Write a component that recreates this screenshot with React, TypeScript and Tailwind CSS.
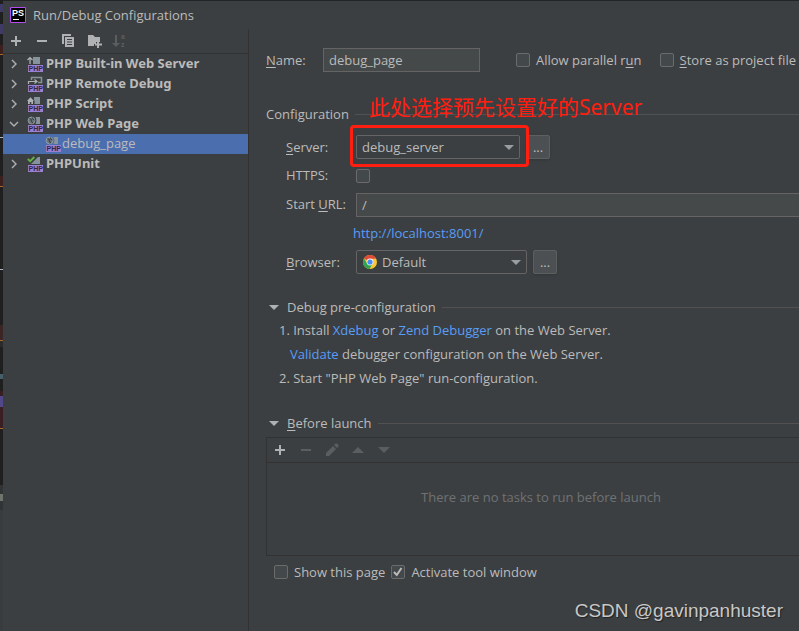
import { ReactNode, useState } from 'react';

type Kind = 'server' | 'remote' | 'script' | 'web' | 'unit';

const CONFIG_TYPES: { label: string; kind: Kind; items?: string[] }[] = [
  { label: 'PHP Built-in Web Server', kind: 'server' },
  { label: 'PHP Remote Debug', kind: 'remote' },
  { label: 'PHP Script', kind: 'script' },
  { label: 'PHP Web Page', kind: 'web', items: ['debug_page'] },
  { label: 'PHPUnit', kind: 'unit' },
];

// Slice of the editor window that shows behind the dialog
const EDITOR_STRIP = [
  'h-[4px] bg-[#1f1f1f]',
  'h-[8px] bg-[#3f3a66]',
  'h-[12px] bg-[#1f1f1f]',
  'h-[10px] bg-[#3f3a66]',
  'h-[11px] bg-[#1f1f1f]',
  'h-[9px] bg-[#3c1f1f]',
  'h-px bg-[#a8682f]',
  'h-[82px] bg-[#1f1f1f]',
  'h-px bg-[#a9b7c6]',
  'h-[38px] bg-[#1f1f1f]',
  'h-[10px] bg-[#3c1f1f]',
  'h-px bg-[#a8682f]',
  'h-[82px] bg-[#1f1f1f]',
  'h-px bg-[#a9b7c6]',
  'h-[55px] bg-[#1f1f1f]',
  'h-[15px] bg-[#3c2525]',
  'h-px bg-[#a8682f]',
  'h-[6px] bg-[#2b2b2b]',
  'h-[27px] bg-[#1f1f1f]',
  'h-[5px] bg-[#46606a]',
  'h-[12px] bg-[#1f1f1f]',
  'h-[5px] bg-[#3a1f22]',
  'h-[11px] bg-[#51478a]',
  'h-[21px] bg-[#3a1f22]',
  'h-px bg-[#a8682f]',
  'h-[56px] bg-[#1f1f1f]',
  'h-[9px] bg-[#313335]',
  'h-[7px] bg-[#6f756c]',
  'h-[9px] bg-[#313335]',
  'flex-1 bg-[#393c3e]',
];

function KindIcon({ kind }: { kind: Kind }) {
  return (
    <svg width="16" height="16" viewBox="0 0 16 16" className="shrink-0" aria-hidden="true">
      {kind === 'server' && (
        <>
          <path d="M6 1h7v7H6z" fill="#87939a" />
          <path d="M3 8V2M.5 4L3 1.500 5.500 4" stroke="#afb1b3" strokeWidth="1.2" fill="none" />
        </>
      )}
      {kind === 'remote' && (
        <>
          <path d="M4.500 4V1.500h10v5H11" stroke="#87939a" strokeWidth="1.5" fill="none" />
          <path d="M1.500 8V5.500h8M7.500 3.500l2.500 2-2.500 2" stroke="#afb1b3" strokeWidth="1.2" fill="none" />
        </>
      )}
      {kind === 'script' && (
        <>
          <path d="M7 1h6v7H7.500V4.500L7 4z" fill="#87939a" />
          <path d="M0 5l3.500-3.800L7 5H6v3H4.300V6H2.800v2H1V5z" fill="#afb1b3" />
        </>
      )}
      {kind === 'web' && (
        <>
          <path d="M9 1h4v7H8.500C9.700 6 9.700 3 8.500 1z" fill="#87939a" />
          <circle cx="4.500" cy="4.500" r="3.400" fill="#6c757b" stroke="#9aa7b0" strokeWidth="0.800" />
          <path d="M2.500 2.500l2 1L4 5l1.500 1L5 7.500M5.500 1.500l.5 2 1.500.5" stroke="#343a3d" strokeWidth="1" fill="none" />
        </>
      )}
      {kind === 'unit' && (
        <>
          <path d="M13 1v7H4l7-7z" fill="#87939a" />
          <path d="M.8 3l2.400 2.200L7.300 1" stroke="#62b543" strokeWidth="1.800" fill="none" />
        </>
      )}
      <path d="M1 9h15v7H1z" fill="#9b7fd0" />
      <text x="1.500" y="15" fontSize="7" fontWeight="700" fontFamily="Liberation Sans, sans-serif" fill="#2f2748">
        PHP
      </text>
    </svg>
  );
}

function Chevron({ open }: { open: boolean }) {
  return (
    <svg width="10" height="10" viewBox="0 0 10 10" fill="none" stroke="#afb1b3" strokeWidth="1.400" aria-hidden="true">
      <path d={open ? 'M1 3l4 4 4-4' : 'M3 1l4 4-4 4'} />
    </svg>
  );
}

function Arrow({ up = false, className = '' }: { up?: boolean; className?: string }) {
  return (
    <svg width="12" height="6" viewBox="0 0 12 6" className={className} fill="currentColor" aria-hidden="true">
      <path d={up ? 'M0 6L6 0l6 6z' : 'M0 0h12L6 6z'} />
    </svg>
  );
}

function ToolButton({ label, disabled, children }: { label: string; disabled?: boolean; children: ReactNode }) {
  return (
    <button
      aria-label={label}
      disabled={disabled}
      className="flex h-4 w-4 items-center justify-center text-[#afb1b3] disabled:text-[#5b5e60]"
    >
      {children}
    </button>
  );
}

const plusIcon = (
  <svg width="16" height="16" viewBox="0 0 16 16" fill="currentColor">
    <path d="M7 3h2v4h4v2H9v4H7V9H3V7h4z" />
  </svg>
);

const minusIcon = (
  <svg width="16" height="16" viewBox="0 0 16 16" fill="currentColor">
    <path d="M3 7h10v2H3z" />
  </svg>
);

function Key({ children }: { children: ReactNode }) {
  return <span className="underline decoration-1 underline-offset-2">{children}</span>;
}

function CheckBox({ id, checked = false, children }: { id: string; checked?: boolean; children?: ReactNode }) {
  const [on, setOn] = useState(checked);

  return (
    <div className="flex items-center gap-[6px] whitespace-nowrap">
      <span className="relative flex h-[14px] w-[14px]">
        <input
          id={id}
          type="checkbox"
          checked={on}
          onChange={(e) => setOn(e.target.checked)}
          className="h-[14px] w-[14px] appearance-none rounded-xs border border-[#6b6b6b] bg-[#43494a]"
        />
        {on && (
          <svg
            width="14"
            height="14"
            viewBox="0 0 14 14"
            className="pointer-events-none absolute inset-0"
            fill="none"
            stroke="#bbbbbb"
            strokeWidth="2"
          >
            <path d="M3 7l2.800 3L10.500 3" />
          </svg>
        )}
      </span>
      {children && <label htmlFor={id}>{children}</label>}
    </div>
  );
}

function Select({ id, value, className, icon }: { id: string; value: string; className: string; icon?: ReactNode }) {
  return (
    <div className={`relative flex h-6 items-center ${className}`}>
      <select
        id={id}
        className={`h-6 w-full appearance-none rounded-xs border border-[#646464] bg-[#3c3f41] ${icon ? 'pl-[25px]' : 'pl-[5px]'}`}
      >
        <option>{value}</option>
      </select>
      {icon && <span className="pointer-events-none absolute left-[7px]">{icon}</span>}
      <Arrow className="pointer-events-none absolute right-[6px] h-[5px] w-[10px] text-[#9a9da0]" />
    </div>
  );
}

function MoreButton({ label }: { label: string }) {
  return (
    <button
      aria-label={label}
      className="h-6 w-6 rounded-xs border border-[#5e6060] bg-[#4c5052] text-center leading-[22px] shadow-sm"
    >
      ...
    </button>
  );
}

const chromeIcon = (
  <svg width="14" height="14" viewBox="0 0 14 14">
    <circle cx="7" cy="7" r="7" fill="#fbc734" />
    <path d="M7 7L1 3.400A7 7 0 0 1 13.200 3.800H7z" fill="#e04a3a" />
    <path d="M1 3.400A7 7 0 0 0 6.500 14L9.800 8.600 4.200 8.600z" fill="#2fa350" />
    <circle cx="7" cy="7" r="3.400" fill="#f1f1f1" />
    <circle cx="7" cy="7" r="2.600" fill="#4a8af4" />
  </svg>
);

function Section({ children, collapsible, id }: { children: ReactNode; collapsible?: boolean; id: string }) {
  return (
    <div className="flex h-5 items-center gap-[6px]">
      {collapsible ? (
        <button aria-expanded="true" aria-controls={id} className="flex items-center gap-2 pl-[3px]">
          <Arrow className="h-[5px] w-[10px] text-[#afb1b3]" />
          <span>{children}</span>
        </button>
      ) : (
        <h2>{children}</h2>
      )}
      <span className="h-px flex-1 bg-[#515151]" />
    </div>
  );
}

function Sidebar() {
  const [selected, setSelected] = useState('debug_page');

  return (
    <aside className="w-[246px] shrink-0 border-r border-[#323232]">
      <div className="flex h-[25px] items-center gap-[10px] border-b border-[#323232] pl-[5px]">
        <ToolButton label="Add">{plusIcon}</ToolButton>
        <ToolButton label="Remove">{minusIcon}</ToolButton>
        <ToolButton label="Copy">
          <svg width="16" height="16" viewBox="0 0 16 16" fill="currentColor">
            <path d="M2 1h9v2H4v8H2z" />
            <path fillRule="evenodd" d="M5 4h9v10H5zM7 6v1h5V6zM7 8.500v1h5v-1zM7 11v1h5v-1z" />
          </svg>
        </ToolButton>
        <ToolButton label="New folder">
          <svg width="16" height="16" viewBox="0 0 16 16" fill="currentColor">
            <path d="M2 2h5l2 2h5v5h-4v2H8v2H2z" />
            <path d="M11 8h2v2.500h3v2h-3V15h-2v-2.500H9v-2h2z" />
          </svg>
        </ToolButton>
        <ToolButton label="Sort" disabled>
          <svg width="16" height="16" viewBox="0 0 16 16" fill="currentColor">
            <path d="M3 2h2v8h3l-4 4-4-4h3z" />
            <text x="9" y="6" fontSize="7" fontWeight="700" fontFamily="Liberation Sans, sans-serif">a</text>
            <text x="9" y="14" fontSize="7" fontWeight="700" fontFamily="Liberation Sans, sans-serif">z</text>
          </svg>
        </ToolButton>
      </div>
      <ul>
        {CONFIG_TYPES.map((type) => (
          <li key={type.label}>
            <button aria-expanded={!!type.items} className="flex h-5 w-full items-center pl-[6px] font-['Noto_Sans',sans-serif] font-bold">
              <Chevron open={!!type.items} />
              <span className="w-2" />
              <KindIcon kind={type.kind} />
              <span className="pb-0.5 pl-[3px]">{type.label}</span>
            </button>
            {type.items?.map((item) => (
              <button
                key={item}
                onClick={() => setSelected(item)}
                className={`flex h-5 w-full items-center pl-[42px] ${selected === item ? 'bg-[#4b6eaf]' : ''}`}
              >
                <KindIcon kind={type.kind} />
                <span className="pb-0.5 pl-px">{item}</span>
              </button>
            ))}
          </li>
        ))}
      </ul>
    </aside>
  );
}

export default function App() {
  return (
    <div className="relative flex min-h-screen overflow-hidden bg-[#3c3f41] font-['Open_Sans','Noto_Sans_CJK_SC',sans-serif] text-[13px] leading-5 text-[#bbbbbb]">
      <div className="flex w-[3px] shrink-0 flex-col" aria-hidden="true">
        {EDITOR_STRIP.map((cls, i) => (
          <div key={i} className={cls} />
        ))}
      </div>

      <div className="flex min-w-0 flex-1 flex-col border-t border-[#232425]">
        <header className="flex h-7 items-center gap-[7px] pl-[7px]">
          <svg width="16" height="16" viewBox="0 0 16 16" aria-hidden="true">
            <path d="M.5.500h15v15H.5z" fill="#000" stroke="#b44df0" />
            <text x="2" y="9" fontSize="9" fontWeight="700" fontFamily="Liberation Sans, sans-serif" fill="#fff">PS</text>
            <path d="M3 12h6v1H3z" fill="#fff" />
          </svg>
          <h1>Run/Debug Configurations</h1>
        </header>

        <div className="flex flex-1">
          <Sidebar />

          <main className="min-w-0 flex-1 pl-[17px] pt-[19px]">
            <div className="flex h-6 items-center whitespace-nowrap">
              <label htmlFor="name" className="w-[57px] shrink-0">
                <Key>N</Key>ame:
              </label>
              <input
                id="name"
                defaultValue="debug_page"
                className="h-6 w-[157px] shrink-0 border border-[#646464] bg-[#45494a] px-[5px]"
              />
              <div className="ml-9 flex gap-[18px]">
                <CheckBox id="parallel">
                  Allow parallel r<Key>u</Key>n
                </CheckBox>
                <CheckBox id="store">
                  <Key>S</Key>tore as project file
                </CheckBox>
              </div>
            </div>

            <div className="relative pt-8">
              <Section id="configuration">Configuration</Section>
              <p className="absolute left-[103px] top-[20px] font-['Noto_Sans','Noto_Sans_CJK_SC',sans-serif] text-[21px] leading-[30px] whitespace-nowrap text-[#ff1e10]">
                此处选择预先设置好的Server
              </p>
            </div>

            <div id="configuration" className="pl-5 pt-[11px]">
              <div className="relative flex h-6 items-center">
                <label htmlFor="server" className="w-[70px]">
                  <Key>S</Key>erver:
                </label>
                <Select id="server" value="debug_server" className="w-[164px]" />
                <div className="ml-[6px] flex">
                  <MoreButton label="Servers" />
                </div>
                <div className="pointer-events-none absolute -top-[10px] left-[64px] h-[42px] w-[179px] rounded-sm border-[3px] border-[#ff1e10]" />
              </div>
              <div className="flex h-[34px] items-center">
                <label htmlFor="https" className="w-[70px] pb-0.5">HTTPS:</label>
                <CheckBox id="https" />
              </div>
              <div className="flex h-6 items-center">
                <label htmlFor="url" className="w-[70px] pb-0.5">
                  Start <Key>U</Key>RL:
                </label>
                <input
                  id="url"
                  defaultValue="/"
                  className="h-6 min-w-0 flex-1 border border-r-0 border-[#646464] bg-[#45494a] px-[5px]"
                />
              </div>
              <a href="http://localhost:8001/" className="ml-[67px] flex h-[33px] items-center pb-0.5 text-[#589df6]">
                http://localhost:8001/
              </a>
              <div className="flex h-6 items-center">
                <label htmlFor="browser" className="w-[70px]">
                  <Key>B</Key>rowser:
                </label>
                <Select id="browser" value="Default" className="w-[171px]" icon={chromeIcon} />
                <div className="ml-[6px] flex">
                  <MoreButton label="Browsers" />
                </div>
              </div>
            </div>

            <div className="pt-[23px]">
              <Section id="preconfig" collapsible>Debug pre-configuration</Section>
              <div id="preconfig" className="pb-[23px] pl-[13px] pt-px leading-6">
                <p>
                  1. Install <a href="#xdebug" className="text-[#589df6]">Xdebug</a> or{' '}
                  <a href="#zend" className="text-[#589df6]">Zend Debugger</a> on the Web Server.
                </p>
                <p className="pl-[11px]">
                  <a href="#validate" className="text-[#589df6]">Validate</a> debugger configuration on the Web Server.
                </p>
                <p>2. Start "PHP Web Page" run-configuration.</p>
              </div>
              <Section id="before" collapsible>
                <Key>B</Key>efore launch
              </Section>
            </div>

            <div id="before" className="mt-1 border border-r-0 border-[#323232]">
              <div className="flex h-[25px] items-center gap-[10px] border-b border-[#323232] pl-[5px]">
                <ToolButton label="Add task">{plusIcon}</ToolButton>
                <ToolButton label="Remove task" disabled>{minusIcon}</ToolButton>
                <ToolButton label="Edit task" disabled>
                  <svg width="16" height="16" viewBox="0 0 16 16" fill="currentColor">
                    <path d="M2 11l7-7 3 3-7 7H2zM10 3l1.500-1.500h1.500L14.500 3v1.500L13 6z" />
                  </svg>
                </ToolButton>
                <ToolButton label="Move up" disabled>
                  <Arrow up />
                </ToolButton>
                <ToolButton label="Move down" disabled>
                  <Arrow />
                </ToolButton>
              </div>
              <p className="flex h-[92px] items-start justify-center pl-4 pt-6 text-[#6f7274]">
                There are no tasks to run before launch
              </p>
            </div>

            <div className="flex gap-[6px] pl-2 pt-[6px]">
              <CheckBox id="show">Show this page</CheckBox>
              <CheckBox id="activate" checked>Activate tool window</CheckBox>
            </div>
          </main>
        </div>
      </div>

      <p className="absolute bottom-[5px] right-4 font-['Liberation_Sans',sans-serif] text-[19px] leading-[30px] text-[#c8c8c8] [text-shadow:1px_1px_1px_#222]">
        CSDN @gavinpanhuster
      </p>
    </div>
  );
}
